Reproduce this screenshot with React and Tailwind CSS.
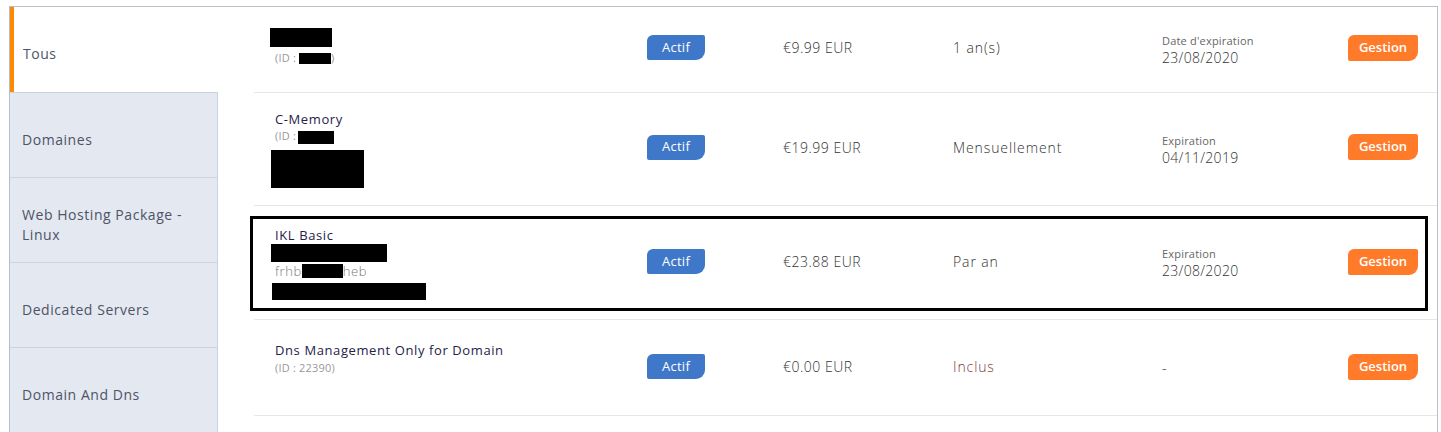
import React from "react";

const F = { fontFamily: '"Open Sans", "Liberation Sans", sans-serif' };

function Actif() {
  return (
    <div className="w-[58px] h-[25px] bg-[#3f78c9] text-white text-[13px] tracking-[0.3px] flex items-center justify-center rounded-tl-[6px] rounded-br-[9px] rounded-tr-[2px] rounded-bl-[2px]">
      Actif
    </div>
  );
}

function Gestion() {
  return (
    <div className="w-[70px] h-[26px] bg-[#ff7a29] text-white text-[13px] font-semibold flex items-center justify-center rounded-tl-[6px] rounded-br-[9px] rounded-tr-[2px] rounded-bl-[2px]">
      Gestion
    </div>
  );
}

function Redact({ w, h, className = "" }) {
  return <span className={"inline-block bg-black align-middle " + className} style={{ width: w, height: h }} />;
}

function Row({ h, name, price, cycle, date, highlight, cycleColor }) {
  return (
    <div className={"relative border-b border-[#e6e6e6] grid grid-cols-[372px_136px_170px_209px_186px_70px] items-center pl-[21px] " + h}>
      {highlight && (
        <div className="absolute left-[-4px] right-[9px] top-[10px] bottom-[8px] border-[3px] border-black pointer-events-none" />
      )}
      <div>{name}</div>
      <div><Actif /></div>
      <div className="text-[14px] font-light text-[#333] tracking-[0.5px]">{price}</div>
      <div className={"text-[14px] font-light tracking-[0.9px] " + (cycleColor || "text-[#333]")}>{cycle}</div>
      <div>{date}</div>
      <div><Gestion /></div>
    </div>
  );
}

function DateCell({ label, value, className = "" }) {
  return (
    <div className={"flex flex-col " + className}>
      <span className="text-[11px] text-[#666] leading-[15px] tracking-[0.2px]">{label}</span>
      <span className="text-[14px] font-light text-[#333] leading-[20px] tracking-[0.3px]">{value}</span>
    </div>
  );
}

export default function App() {
  const tabs = ["Domaines", "Web Hosting Package - Linux", "Dedicated Servers", "Domain And Dns"];
  return (
    <div className="bg-white w-[1441px] h-[432px] overflow-hidden pl-[9px] pt-[6px]" style={F}>
      <div className="flex w-[1429px] border-t border-l border-r border-[#b9bfc8] h-[426px]">
        <div className="w-[208px] flex flex-col shrink-0">
          <div className="h-[85px] border-l-4 border-[#ff8a00] bg-white flex items-center pl-[9px] pt-[8px] text-[14px] text-[#4d5467] tracking-[0.5px] w-[244px]">
            Tous
          </div>
          {tabs.map((t) => (
            <div key={t} className="h-[85px] bg-[#e4e8f0] border-t border-r border-[#cdd3db] flex items-center px-[12px] pt-[9px] text-[14px] text-[#4d5467] leading-[20px] tracking-[0.55px]">
              {t}
            </div>
          ))}
        </div>
        <div className="flex-1 pl-[36px] flex flex-col">
          <Row
            h="h-[86px] pb-[4px]"
            name={
              <div className="flex flex-col -mt-[3px]">
                <Redact w={62} h={19} className="-ml-[5px]" />
                <span className="text-[11px] text-[#999] leading-[14px] mt-[4px] tracking-[0.2px]">
                  (ID : <Redact w={32} h={11} className="ml-[0px]" />)
                </span>
              </div>
            }
            price="€9.99 EUR"
            cycle="1 an(s)"
            date={<DateCell label="Date d'expiration" value="23/08/2020" className="mt-[5px]" />}
          />
          <Row
            h="h-[113px] pb-[4px]"
            name={
              <div className="flex flex-col pt-[5px]">
                <span className="text-[13px] text-[#23234a] leading-[17px] tracking-[0.6px]">C-Memory</span>
                <span className="text-[11px] text-[#999] leading-[14px] mt-[1px] tracking-[0.2px]">
                  (ID : <Redact w={36} h={13} className="-ml-[1px]" />
                </span>
                <Redact w={93} h={38} className="-ml-[4px] mt-[6px]" />
              </div>
            }
            price="€19.99 EUR"
            cycle="Mensuellement"
            date={<DateCell label="Expiration" value="04/11/2019" className="mt-[7px]" />}
          />
          <Row
            h="h-[114px] pb-[2px]"
            highlight
            name={
              <div className="flex flex-col pt-[4px]">
                <span className="text-[13px] text-[#23234a] leading-[17px] tracking-[0.6px]">IKL Basic</span>
                <Redact w={116} h={18} className="-ml-[4px]" />
                <span className="text-[13px] text-[#777] leading-[18px] font-light tracking-[0.6px]">
                  frhb<Redact w={41} h={14} className="-mt-[3px]" />heb
                </span>
                <Redact w={154} h={17} className="-ml-[3px] mt-[3px]" />
              </div>
            }
            price="€23.88 EUR"
            cycle="Par an"
            date={<DateCell label="Expiration" value="23/08/2020" className="mt-[4px]" />}
          />
          <Row
            h="h-[96px] pb-[2px]"
            name={
              <div className="flex flex-col -mt-[17px]">
                <span className="text-[13px] text-[#23234a] leading-[17px] tracking-[0.6px]">Dns Management Only for Domain</span>
                <span className="text-[11px] text-[#999] leading-[14px] mt-[2px] tracking-[0.2px]">(ID : 22390)</span>
              </div>
            }
            price="€0.00 EUR"
            cycle="Inclus"
            cycleColor="text-[#7b3b3b]"
            date={<span className="text-[14px] text-[#333] font-light">-</span>}
          />
        </div>
      </div>
    </div>
  );
}
